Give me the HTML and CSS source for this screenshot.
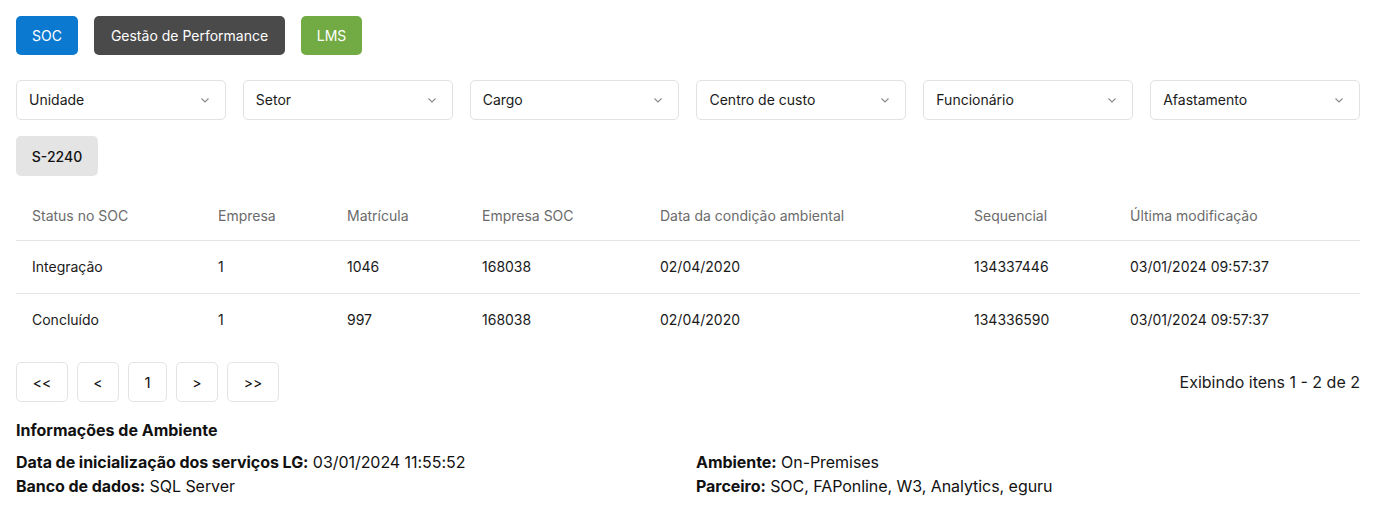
FILE: index.html
```html
<!DOCTYPE html>
<html lang="pt">
<head>
<meta charset="utf-8">
<link rel="stylesheet" href="styles.css">
</head>
<body>
<div class="page">
  <div class="apps">
    <button class="app app-soc">SOC</button>
    <button class="app app-perf">Gestão de Performance</button>
    <button class="app app-lms">LMS</button>
  </div>

  <div class="filters">
    <div class="select"><span>Unidade</span><svg class="chev" viewBox="0 0 12 12"><path d="M2.5 4.5 6 8l3.5-3.5"/></svg></div>
    <div class="select"><span>Setor</span><svg class="chev" viewBox="0 0 12 12"><path d="M2.5 4.5 6 8l3.5-3.5"/></svg></div>
    <div class="select"><span>Cargo</span><svg class="chev" viewBox="0 0 12 12"><path d="M2.5 4.5 6 8l3.5-3.5"/></svg></div>
    <div class="select"><span>Centro de custo</span><svg class="chev" viewBox="0 0 12 12"><path d="M2.5 4.5 6 8l3.5-3.5"/></svg></div>
    <div class="select"><span>Funcionário</span><svg class="chev" viewBox="0 0 12 12"><path d="M2.5 4.5 6 8l3.5-3.5"/></svg></div>
    <div class="select"><span>Afastamento</span><svg class="chev" viewBox="0 0 12 12"><path d="M2.5 4.5 6 8l3.5-3.5"/></svg></div>
  </div>

  <div class="tabs">
    <button class="tab">S-2240</button>
  </div>

  <table class="grid">
    <colgroup>
      <col class="c1"><col class="c2"><col class="c3"><col class="c4"><col class="c5"><col class="c6"><col class="c7">
    </colgroup>
    <thead>
      <tr>
        <th>Status no SOC</th><th>Empresa</th><th>Matrícula</th><th>Empresa SOC</th><th>Data da condição ambiental</th><th>Sequencial</th><th>Última modificação</th>
      </tr>
    </thead>
    <tbody>
      <tr>
        <td>Integração</td><td>1</td><td>1046</td><td>168038</td><td>02/04/2020</td><td>134337446</td><td>03/01/2024 09:57:37</td>
      </tr>
      <tr>
        <td>Concluído</td><td>1</td><td>997</td><td>168038</td><td>02/04/2020</td><td>134336590</td><td>03/01/2024 09:57:37</td>
      </tr>
    </tbody>
  </table>

  <div class="pager">
    <div class="pages">
      <button class="pg pg-first">&lt;&lt;</button>
      <button class="pg pg-prev">&lt;</button>
      <button class="pg pg-num">1</button>
      <button class="pg pg-next">&gt;</button>
      <button class="pg pg-last">&gt;&gt;</button>
    </div>
    <div class="count">Exibindo itens 1 - 2 de 2</div>
  </div>

  <section class="env">
    <h3 class="env-title">Informações de Ambiente</h3>
    <div class="env-grid">
      <div class="env-col">
        <div><b>Data de inicialização dos serviços LG:</b> 03/01/2024 11:55:52</div>
        <div><b>Banco de dados:</b> SQL Server</div>
      </div>
      <div class="env-col">
        <div><b>Ambiente:</b> On-Premises</div>
        <div><b>Parceiro:</b> SOC, FAPonline, W3, Analytics, eguru</div>
      </div>
    </div>
  </section>
</div>
</body>
</html>
```

FILE: styles.css
```css
* { box-sizing: border-box; }
html, body { margin: 0; padding: 0; background: #fff; }
body {
  font-family: Inter, "Noto Sans", "Liberation Sans", sans-serif;
  color: #111;
  font-size: 14px;
}
.page { padding: 16px; }

button { font-family: inherit; cursor: pointer; }

.apps { display: flex; gap: 16px; }
.app {
  height: 39px;
  border: 0;
  border-radius: 5px;
  color: #fff;
  font-size: 14px;
  padding: 0;
}
.app-soc { background: #0a79cf; width: 62px; }
.app-perf { background: #4a4a4a; width: 191px; }
.app-lms { background: #72aa43; width: 61px; }

.filters {
  margin-top: 25px;
  display: grid;
  grid-template-columns: repeat(6, 1fr);
  gap: 17px;
}
.select {
  height: 40px;
  border: 1px solid #e2e2e2;
  border-radius: 5px;
  display: flex;
  align-items: center;
  justify-content: space-between;
  padding: 0 14px 1px 12px;
  font-size: 14px;
  color: #1a1a1a;
}
.chev { width: 12px; height: 12px; fill: none; stroke: #8a8a8a; stroke-width: 1.1; }

.tabs { margin-top: 16px; }
.tab {
  height: 40px;
  width: 82px;
  border: 0;
  border-radius: 5px;
  background: #e4e4e4;
  color: #111;
  font-size: 14px;
  font-weight: 500;
}

.grid {
  margin-top: 16px;
  width: 100%;
  border-collapse: collapse;
  font-size: 14px;
}
.c1 { width: 186px; } .c2 { width: 129px; } .c3 { width: 135px; } .c4 { width: 178px; }
.c5 { width: 314px; } .c6 { width: 156px; } .c7 { width: auto; }
.grid th {
  text-align: left;
  font-weight: 400;
  color: #6b6b6b;
  height: 48px;
  padding: 0 16px;
  border-bottom: 1px solid #e4e4e4;
}
.grid td {
  height: 53px;
  padding: 0 16px;
  color: #1a1a1a;
}
.grid tbody tr + tr td { border-top: 1px solid #e4e4e4; }

.pager {
  margin-top: 16px;
  display: flex;
  align-items: center;
  justify-content: space-between;
}
.pages { display: flex; gap: 9px; }
.pg {
  height: 40px;
  background: #fff;
  border: 1px solid #e4e4e4;
  border-radius: 5px;
  font-size: 14px;
  color: #111;
  padding: 0;
}
.pg-first { width: 52px; }
.pg-prev { width: 42px; }
.pg-num { width: 39px; font-size: 15px; }
.pg-next { width: 42px; }
.pg-last { width: 52px; }
.count { font-size: 16px; color: #1a1a1a; }

.env { margin-top: 18px; }
.env-title { margin: 0 0 10px; font-size: 16px; font-weight: 700; line-height: 20px; }
.env-grid {
  display: grid;
  grid-template-columns: 1fr 1fr;
  gap: 16px;
  font-size: 16px;
  line-height: 24px;
  letter-spacing: -0.05px;
}
.env-grid b { font-weight: 700; }
```
